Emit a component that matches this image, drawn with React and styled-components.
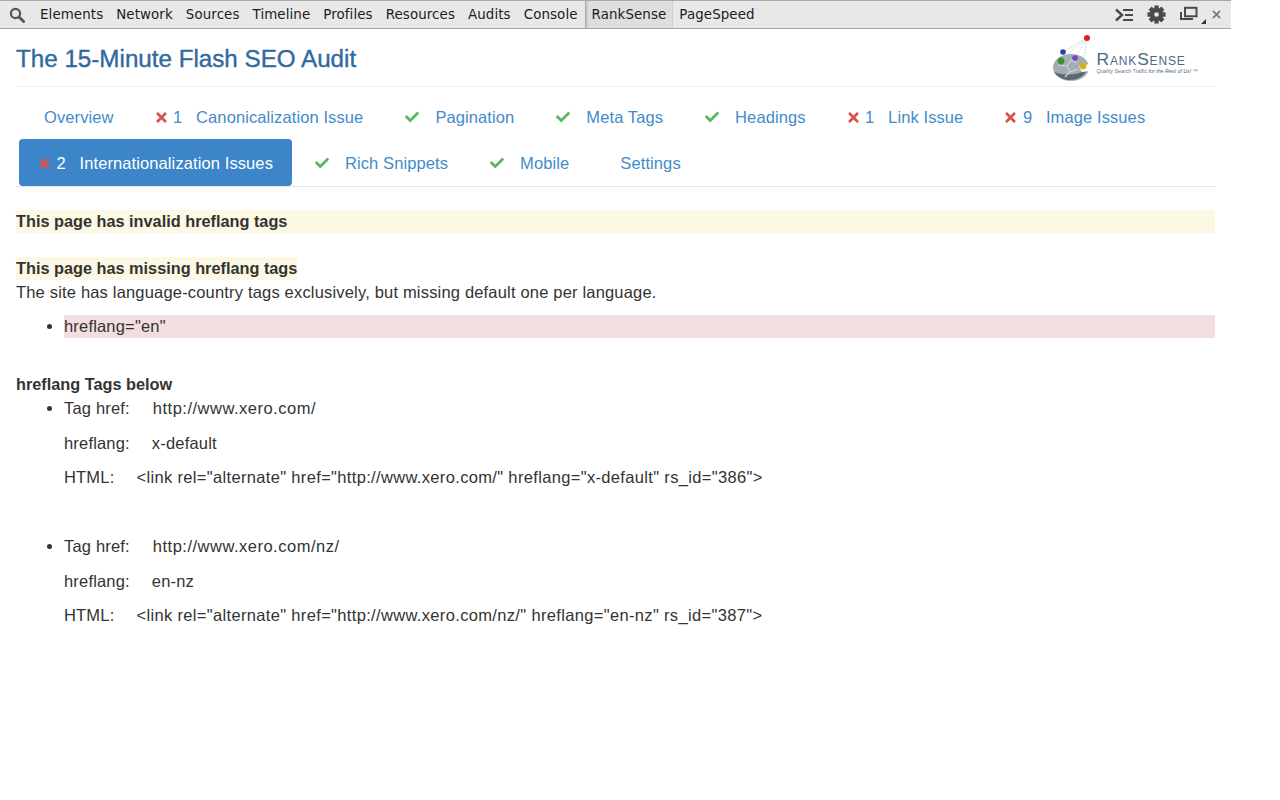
import React from "react";
import styled, { createGlobalStyle } from "styled-components";
import { FaCheck, FaTimes } from "react-icons/fa";

const GlobalStyle = createGlobalStyle`
  html, body {
    margin: 0;
    background: #fff;
  }
  body {
    font-family: "Liberation Sans", Arial, sans-serif;
    font-size: 16.5px;
    line-height: 23px;
    color: #333;
  }
`;

const Page = styled.div`
  width: 1231px;
`;

const Toolbar = styled.div`
  display: flex;
  align-items: center;
  height: 27px;
  padding-right: 10px;
  background: #e8e8e8;
  border-top: 1px solid #a8a8a8;
  border-bottom: 1px solid #a5a5a5;
  font-family: "DejaVu Sans", sans-serif;
  font-size: 13.4px;
  letter-spacing: 0.1px;
  color: #1c1c1c;
`;

const SearchButton = styled.svg`
  width: 16px;
  height: 16px;
  margin: 0 15px 0 9px;
`;

const ToolTab = styled.div`
  padding: 0 ${(p) => (p.$framed ? "6px" : "0")};
  margin-right: ${(p) => (p.$framed ? "6px" : "13px")};
  margin-left: ${(p) => (p.$framed ? "-6px" : "0")};
  line-height: 27px;
  background: ${(p) => (p.$framed ? "#dedede" : "transparent")};
  border-left: ${(p) => (p.$framed ? "1px solid #aaa" : "none")};
  border-right: ${(p) => (p.$framed ? "1px solid #cfcfcf" : "none")};
  box-shadow: ${(p) => (p.$framed ? "inset 3px 0 3px -2px #bbb" : "none")};
`;

const ToolIcons = styled.div`
  display: flex;
  align-items: center;
  gap: 14px;
  margin-left: auto;
`;

const CloseIcon = styled.svg`
  width: 9px;
  height: 9px;
  margin-left: -8px;
`;

const Content = styled.div`
  padding: 0 16px;
`;

const Header = styled.div`
  display: flex;
  justify-content: space-between;
  height: 57px;
  border-bottom: 1px solid #eee;
`;

const Title = styled.h1`
  margin: 16px 0 0;
  font-size: 24.2px;
  line-height: 28px;
  font-weight: 500;
  color: #31699f;
  -webkit-text-stroke: 0.4px #31699f;
`;

const Logo = styled.div`
  display: flex;
  align-items: flex-start;
  gap: 3px;
  margin: 5px 17px 0 0;
`;

const LogoText = styled.div`
  margin-top: 18px;
`;

const LogoName = styled.div`
  font-size: 17.4px;
  line-height: 14px;
  letter-spacing: 0.85px;
  color: #4d6a86;
  font-variant: small-caps;
`;

const LogoTag = styled.div`
  margin-top: 2px;
  font-size: 5.3px;
  line-height: 7px;
  white-space: nowrap;
  color: #66788c;
`;

const LogoTagEm = styled.em`
  color: #4d5f72;
`;

const Tabs = styled.div`
  display: flex;
  flex-wrap: wrap;
  gap: 0 3px;
  padding: 7px 0 0 3px;
  border-bottom: 1px solid #e6e6e6;
`;

const Tab = styled.a`
  display: flex;
  align-items: center;
  box-sizing: border-box;
  height: ${(p) => (p.$active ? "47px" : "46px")};
  margin-top: ${(p) => (p.$active ? "-1px" : "0")};
  padding: ${(p) => (p.$active ? "2px" : "0")} 19px 0 ${(p) => 19 + (p.$indent || 0)}px;
  border-radius: 4px;
  letter-spacing: 0.1px;
  color: ${(p) => (p.$active ? "#fff" : "#428bca")};
  background: ${(p) => (p.$active ? "#3c85c9" : "transparent")};
`;

const Cross = styled(FaTimes)`
  width: 13px;
  height: 15px;
  margin-right: 5.5px;
  color: #d9534f;
`;

const Check = styled(FaCheck)`
  width: 16px;
  height: 14px;
  margin-right: 15px;
  color: #5cb85c;
`;

const Count = styled.span`
  width: 23px;
`;

const Body = styled.div`
  padding-top: 23px;
  letter-spacing: 0.18px;
`;

const Warning = styled.div`
  display: ${(p) => (p.$inline ? "inline-block" : "block")};
  margin-bottom: ${(p) => (p.$inline ? "0" : "24px")};
  background: #fcf8e3;
  font-size: 16.3px;
  font-weight: 700;
  letter-spacing: 0;
  vertical-align: top;
`;

const Intro = styled.div`
  margin-top: 1px;
`;

const Strong = styled.div`
  margin-top: 35px;
  font-size: 16.3px;
  font-weight: 700;
  letter-spacing: 0;
`;

const List = styled.ul`
  margin: ${(p) => p.$top || 0}px 0 0;
  padding-left: 48px;
`;

const Danger = styled.li`
  margin-top: 11px;
  background: #f2dede;
`;

const Field = styled.p`
  margin: 0 0 11.5px;
`;

const Gap = styled.span`
  display: inline-block;
  width: ${(p) => p.$w}px;
`;

const Value = styled.span`
  letter-spacing: ${(p) => p.$spread}px;
`;

const TagItem = styled.li`
  margin-bottom: 46px;
`;

function Tabbed({ kind, count, indent, active, children }) {
  return (
    <Tab $active={active} $indent={indent}>
      {kind === "cross" && <Cross />}
      {kind === "cross" && <Count>{count}</Count>}
      {kind === "check" && <Check />}
      {children}
    </Tab>
  );
}

const hreflangs = [
  {
    href: "http://www.xero.com/",
    lang: "x-default",
    html: '<link rel="alternate" href="http://www.xero.com/" hreflang="x-default" rs_id="386">',
  },
  {
    href: "http://www.xero.com/nz/",
    lang: "en-nz",
    html: '<link rel="alternate" href="http://www.xero.com/nz/" hreflang="en-nz" rs_id="387">',
  },
];

export default function App() {
  return (
    <Page>
      <GlobalStyle />
      <Toolbar>
        <SearchButton viewBox="0 0 16 16">
          <circle cx="6.5" cy="6.5" r="4.6" fill="none" stroke="#555" strokeWidth="2.2" />
          <path d="M10 10l4.6 4.6" stroke="#555" strokeWidth="2.8" strokeLinecap="round" />
        </SearchButton>
        <ToolTab>Elements</ToolTab>
        <ToolTab>Network</ToolTab>
        <ToolTab>Sources</ToolTab>
        <ToolTab>Timeline</ToolTab>
        <ToolTab>Profiles</ToolTab>
        <ToolTab>Resources</ToolTab>
        <ToolTab>Audits</ToolTab>
        <ToolTab>Console</ToolTab>
        <ToolTab $framed>RankSense</ToolTab>
        <ToolTab>PageSpeed</ToolTab>
        <ToolIcons>
          <svg width="18" height="14" viewBox="0 0 18 14">
            <path d="M1 1.5l6 5.5-6 5.5" fill="none" stroke="#4a4a4a" strokeWidth="2.4" />
            <path d="M8 2h10M10 7h8M8 12h10" stroke="#4a4a4a" strokeWidth="2" />
          </svg>
          <svg width="19" height="19" viewBox="0 0 20 20">
            <g stroke="#4a4a4a" strokeWidth="4.6">
              <path d="M10 0.5v19M0.5 10h19M3.3 3.3l13.4 13.4M16.7 3.3L3.3 16.7" />
            </g>
            <circle cx="10" cy="10" r="7" fill="#4a4a4a" />
            <circle cx="10" cy="10" r="2.4" fill="#e8e8e8" />
          </svg>
          <svg width="26" height="18" viewBox="0 0 26 18">
            <rect x="5" y="1.8" width="11.5" height="8.5" fill="none" stroke="#4a4a4a" strokeWidth="2" />
            <path d="M1 6v7h12" fill="none" stroke="#4a4a4a" strokeWidth="2" />
            <path d="M26 13v5h-5z" fill="#333" />
          </svg>
          <CloseIcon viewBox="0 0 10 10">
            <path d="M1 1l8 8M9 1l-8 8" stroke="#777" strokeWidth="1.8" />
          </CloseIcon>
        </ToolIcons>
      </Toolbar>
      <Content>
        <Header>
          <Title>The 15-Minute Flash SEO Audit</Title>
          <Logo>
            <svg width="42" height="50" viewBox="0 0 42 50">
              <path d="M9 26L35 4M11 18L35 4M23 24L35 4M31 32L35 4" stroke="#d4d4d4" strokeWidth="1" strokeDasharray="2 1" />
              <ellipse cx="19" cy="33.5" rx="18" ry="13.5" fill="#a4acb4" />
              <path d="M2 38c7 11 27 11 33-2-9 5-24 6-33 2z" fill="#5c6975" />
              <path d="M27 32l10-2v7l-7 1-2-3z" fill="#fff" />
              <path d="M6 31l9 1 3 6-5 5M18 38l8-3M15 32l4-6 6 3" fill="none" stroke="#d2d7db" strokeWidth="1.1" />
              <circle cx="35" cy="4" r="3" fill="#e01c1c" />
              <circle cx="11" cy="18" r="2.8" fill="#2342a8" />
              <circle cx="9" cy="27" r="3.4" fill="#3b8f35" />
              <circle cx="23" cy="24" r="2.8" fill="#7b3fc0" />
              <circle cx="31" cy="32" r="3.4" fill="#d4b21c" />
            </svg>
            <LogoText>
              <LogoName>RankSense</LogoName>
              <LogoTag>
                Quality Search Traffic <LogoTagEm>for the Rest of Us!</LogoTagEm> ™
              </LogoTag>
            </LogoText>
          </Logo>
        </Header>
        <Tabs>
          <Tabbed indent={6}>Overview</Tabbed>
          <Tabbed kind="cross" count="1">Canonicalization Issue</Tabbed>
          <Tabbed kind="check">Pagination</Tabbed>
          <Tabbed kind="check">Meta Tags</Tabbed>
          <Tabbed kind="check">Headings</Tabbed>
          <Tabbed kind="cross" count="1">Link Issue</Tabbed>
          <Tabbed kind="cross" count="9">Image Issues</Tabbed>
          <Tabbed kind="cross" count="2" active>Internationalization Issues</Tabbed>
          <Tabbed kind="check">Rich Snippets</Tabbed>
          <Tabbed kind="check">Mobile</Tabbed>
          <Tabbed indent={10}>Settings</Tabbed>
        </Tabs>
        <Body>
          <Warning>This page has invalid hreflang tags</Warning>
          <Warning $inline>This page has missing hreflang tags</Warning>
          <Intro>The site has language-country tags exclusively, but missing default one per language.</Intro>
          <List>
            <Danger>hreflang="en"</Danger>
          </List>
          <Strong>hreflang Tags below</Strong>
          <List $top={1}>
            {hreflangs.map((tag) => (
              <TagItem key={tag.href}>
                <Field>Tag href:<Gap $w={23} /><Value $spread={0.5}>{tag.href}</Value></Field>
                <Field>hreflang:<Gap $w={22} />{tag.lang}</Field>
                <Field>HTML:<Gap $w={22} /><Value $spread={0.34}>{tag.html}</Value></Field>
              </TagItem>
            ))}
          </List>
        </Body>
      </Content>
    </Page>
  );
}
